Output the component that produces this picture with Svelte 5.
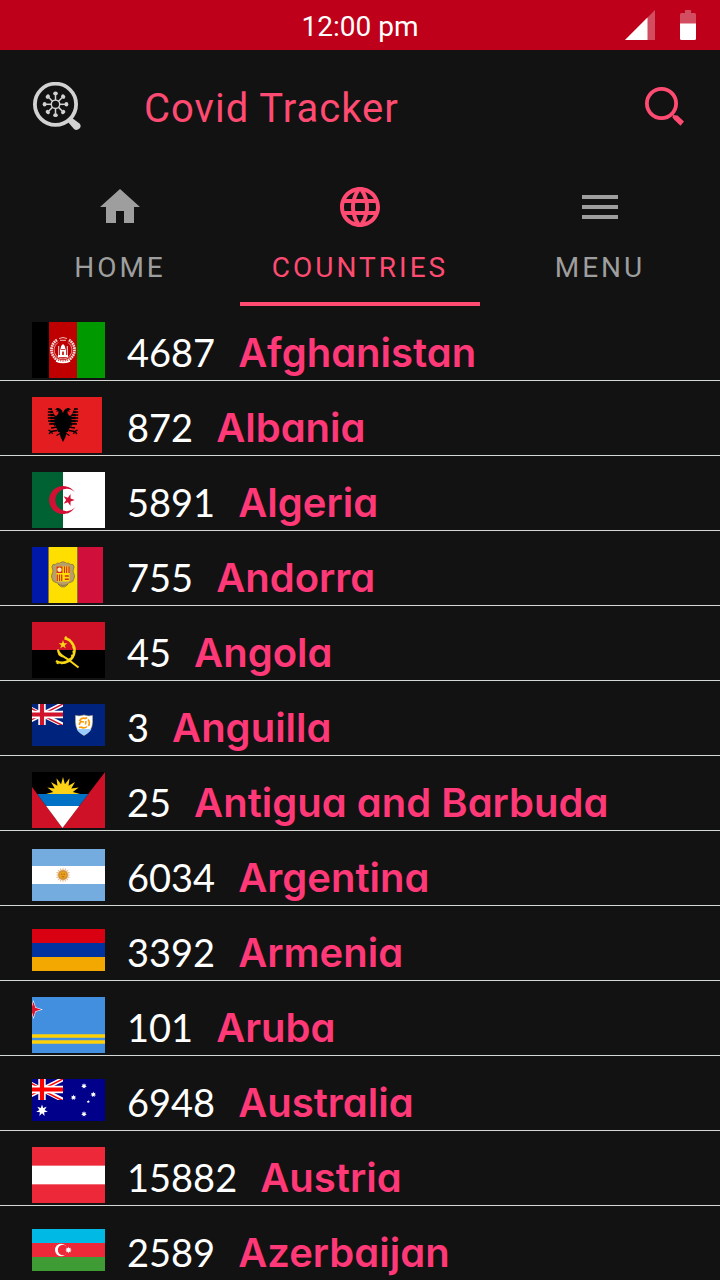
<script>
  const tabs = [
    { label: 'HOME', path: 'M10 20v-6h4v6h5v-8h3L12 3 2 12h3v8z' },
    {
      label: 'COUNTRIES',
      active: true,
      path: 'M11.99 2C6.47 2 2 6.48 2 12s4.47 10 9.99 10C17.52 22 22 17.52 22 12S17.52 2 11.99 2zm6.93 6h-2.95a15.65 15.65 0 0 0-1.38-3.56A8.03 8.03 0 0 1 18.92 8zM12 4.04c.83 1.2 1.48 2.53 1.91 3.96h-3.82c.43-1.43 1.08-2.76 1.91-3.96zM4.26 14C4.1 13.36 4 12.69 4 12s.1-1.36.26-2h3.38c-.08.66-.14 1.32-.14 2s.06 1.34.14 2H4.26zm.82 2h2.95c.32 1.25.78 2.45 1.38 3.56A7.99 7.99 0 0 1 5.08 16zm2.95-8H5.08a7.99 7.99 0 0 1 4.33-3.56A15.65 15.65 0 0 0 8.03 8zM12 19.96c-.83-1.2-1.48-2.53-1.91-3.96h3.82c-.43 1.43-1.08 2.76-1.91 3.96zM14.34 14H9.66c-.09-.66-.16-1.32-.16-2s.07-1.35.16-2h4.68c.09.65.16 1.32.16 2s-.07 1.34-.16 2zm.25 5.56c.6-1.11 1.06-2.31 1.38-3.56h2.95a8.03 8.03 0 0 1-4.33 3.56zM16.36 14c.08-.66.14-1.32.14-2s-.06-1.34-.14-2h3.38c.16.64.26 1.31.26 2s-.1 1.36-.26 2h-3.38z'
    },
    { label: 'MENU', path: 'M3 18h18v-2H3v2zm0-5h18v-2H3v2zm0-7v2h18V6H3z' }
  ];

  // box is the visible part of each flag: x, y, width, height
  const countries = [
    { code: 'af', name: 'Afghanistan', cases: 4687, box: [11, 0, 73, 56] },
    { code: 'al', name: 'Albania', cases: 872, box: [0, 0, 70, 56] },
    { code: 'dz', name: 'Algeria', cases: 5891, box: [11, 0, 73, 56] },
    { code: 'ad', name: 'Andorra', cases: 755, box: [0, 0, 71, 56] },
    { code: 'ao', name: 'Angola', cases: 45, box: [11, 0, 73, 56] },
    { code: 'ai', name: 'Anguilla', cases: 3, box: [11, 0, 73, 42] },
    { code: 'ag', name: 'Antigua and Barbuda', cases: 25, box: [0, 0, 73, 56] },
    { code: 'ar', name: 'Argentina', cases: 6034, box: [0, 0, 73, 52] },
    { code: 'am', name: 'Armenia', cases: 3392, box: [0, 0, 73, 42] },
    { code: 'aw', name: 'Aruba', cases: 101, box: [0, 0, 73, 56] },
    { code: 'au', name: 'Australia', cases: 6948, box: [11, 0, 73, 42] },
    { code: 'at', name: 'Austria', cases: 15882, box: [0, 0, 73, 56] },
    { code: 'az', name: 'Azerbaijan', cases: 2589, box: [0, 0, 73, 42] }
  ];

  function star(cx, cy, outer, inner, points, start = -90) {
    const out = [];
    for (let i = 0; i < points * 2; i++) {
      const r = i % 2 ? inner : outer;
      const a = ((start + (i * 180) / points) * Math.PI) / 180;
      out.push(`${(cx + r * Math.cos(a)).toFixed(2)},${(cy + r * Math.sin(a)).toFixed(2)}`);
    }
    return out.join(' ');
  }

  const spokes = [0, 45, 90, 135, 180, 225, 270, 315];
</script>

{#snippet unionJack(red)}
  <svg x="0" y="0" width="42" height="21" viewBox="0 0 42 21">
    <path d="M0 0L42 21M42 0L0 21" stroke="#fff" stroke-width="4.6" />
    <path d="M21 11.2L42 21.7M21 10.5L42 0M0 -.7L21 9.8M0 21L21 10.5" stroke={red} stroke-width="1.5" />
    <path d="M21 0V21M0 10.5H42" stroke="#fff" stroke-width="7.4" />
    <path d="M21 0V21M0 10.5H42" stroke={red} stroke-width="4.2" />
  </svg>
{/snippet}

{#snippet flag(c)}
  <svg class="flag" viewBox={c.box.join(' ')} width={c.box[2]} height={c.box[3]} aria-hidden="true">
    {#if c.code === 'af'}
      <rect width="28" height="56" fill="#000" />
      <rect x="28" width="28" height="56" fill="#bf0000" />
      <rect x="56" width="28" height="56" fill="#009900" />
      <g fill="none" stroke="#fff">
        <path d="M36 18A11.500 11.500 0 1 0 48 18" stroke-width="2.8" stroke-dasharray="1.700 .6" opacity=".85" />
        <path d="M37 20.500A9 9 0 1 0 47 20.500" stroke-width=".6" />
        <path d="M38 16.500q4 -2 8 0M39 18.300h6" stroke-width=".9" opacity=".8" />
        <path d="M35 39q7 3 14 0" stroke-width="1.600" />
        <path d="M37.700 24v9M46.300 24v9" stroke-width=".9" />
      </g>
      <path d="M39 33v-6h.5q0-3.500 2.500-5q2.500 1.500 2.500 5h.5v6z" fill="#fff" />
      <path d="M41.200 33v-3q.8-1.300 1.600 0V33zM39.500 27h5v.7h-5z" fill="#bf0000" />
      <path d="M37 33h10v2.200h-10z" fill="#fff" />
    {:else if c.code === 'al'}
      <rect width="70" height="56" fill="#e41e20" />
      <g stroke="#000" stroke-width="1.300" fill="none">
        {#each [1, -1] as side}
          <g transform={`translate(31 0) scale(${side} 1)`}>
            <path fill="#000" stroke="none" d="M0 16.500C.5 13 3 10.800 6 11L8 12.800L5.500 13L7 14.800L4.500 14.300C4.200 16 5 18 7 19C9.500 18 10 14 11.500 11.500L12.500 12V27L9.500 26.500L8.500 31L6.500 31L5 35L3.500 35L2.500 40L0 45z" />
            <path d="M11 12h3.800M10 15h5.200M9 18h6.200M8 21h7.200M8 24h7M8 27h6M6 30l6 1M6 33.500l6 1l2.500-1.500M12 34.500l2 2.500M11.500 34.500l-1 2.500M3 36.500l3.500 2" />
            <path d="M10.500 13.500h5M9.500 16.500h6M8.500 19.500h7M8.500 22.500h7M8.500 25.500h6.500M7 29l6 .5" stroke="#e41e20" stroke-width=".8" />
          </g>
        {/each}
      </g>
    {:else if c.code === 'dz'}
      <rect width="42" height="56" fill="#006233" />
      <rect x="42" width="42" height="56" fill="#fff" />
      <path d="M54 20.700A14 14 0 1 0 54 35.300A11.200 11.200 0 1 1 54 20.700z" fill="#d21034" />
      <polygon points={star(47.6, 28, 6.2, 2.4, 5, 0)} fill="#d21034" />
    {:else if c.code === 'ad'}
      <rect width="17" height="56" fill="#0018a8" />
      <rect x="16" width="30" height="56" fill="#8b6f3c" />
      <rect x="17" width="28" height="56" fill="#fedf00" />
      <rect x="46" width="25" height="56" fill="#d0103a" />
      <path d="M21 17.500q3 .5 4.500-1.500q2 1 3-.500q2.500-1.500 5 0q1 1.500 3 .5q1.500 2 4.500 1.500q2 2.500 .5 4.500q-1 2 0 4q2 3 .5 5.500q-.5 3.500-4 4q-2 0-3 2.500q-2 2.500-4 2q-2 .5-4-2q-1-2.500-3-2.500q-3.500-.5-4-4q-1.500-2.500 .5-5.500q1-2 0-4q-1.500-2 .5-4.500z" fill="#b89f68" stroke="#8b7440" stroke-width=".8" />
      <rect x="24.500" y="19.500" width="13" height="15" rx="1" fill="#fedf00" />
      <rect x="24.500" y="19.500" width="6" height="6.500" fill="#d52b1e" />
      <circle cx="27.500" cy="22.800" r="2.200" fill="#ffe9b0" />
      <path d="M32.500 19.500v6.500M34.700 19.500v6.500M37 19.500v6.500M25.300 27.500v6.500M27.500 27.500v6.500M29.700 27.500v6.500" stroke="#d52b1e" stroke-width="1.200" />
      <path d="M32.800 29h4M32.800 32.300h4" stroke="#d52b1e" stroke-width="1.500" />
      <path d="M26 37.500q5 2 10 0" stroke="#8b7440" fill="none" />
    {:else if c.code === 'ao'}
      <rect width="84" height="28" fill="#ce1126" />
      <rect y="28" width="84" height="28" fill="#000" />
      <g fill="none" stroke="#f9d616">
        <path d="M43.500 16.300A12.300 12.300 0 1 1 35 39" stroke-width="2.600" />
        <path d="M44 15A13.500 13.500 0 1 1 34 40.300" stroke-width="2" stroke-dasharray="2 2.300" />
        <path d="M37 27.500C38 34 44 34.500 48.500 38.500L57.500 45.500" stroke-width="2" />
      </g>
      <path d="M36.500 27.500l2 4l4 3l-1 1q-6-2-5-8z" fill="#f9d616" />
      <polygon points={star(42, 22.6, 4.6, 1.8, 5)} fill="#f9d616" />
    {:else if c.code === 'ai'}
      <rect width="84" height="42" fill="#00247d" />
      {@render unionJack('#cf142b')}
      <path d="M54.500 11.500q4 1 8.500-.500q4.500 1.500 8.500 .500V18q0 9-8.500 13.500Q54.500 27 54.500 18z" fill="#fff" stroke="#b8b083" stroke-width=".6" />
      <path d="M55.700 25h14.600q-2 4-7.300 6.200q-5.300-2.200-7.300-6.200z" fill="#9cf" />
      <path d="M58.500 17q2-4 6-2.500l1.500-1M67 15.500q2.500 3 .5 6.500M66 22.500q-3 2.500-6 .5l-2 .5M58.500 21q-.5-2 1.500-3.500l3 .5M65 17l-.5 3.500" fill="none" stroke="#ff9900" stroke-width="1.600" />
    {:else if c.code === 'ag'}
      <rect width="73" height="56" fill="#ce1126" />
      <path d="M0 0H73L30.500 56L0 15z" fill="#000" />
      <polygon points={star(31, 22, 17, 10, 16)} fill="#fcd116" />
      <path d="M5.200 22H56.300L47.200 34H14.100z" fill="#0072c6" />
      <path d="M14.100 34H47.200L30.500 56z" fill="#fff" />
    {:else if c.code === 'ar'}
      <rect width="73" height="52" fill="#74acdf" />
      <rect y="17" width="73" height="18" fill="#fff" />
      <polygon points={star(31, 26, 7.8, 4.4, 16)} fill="#dcae78" />
      <circle cx="31" cy="26" r="4.200" fill="#e8a01c" stroke="#b8782a" stroke-width=".6" />
      <path d="M29 25.200h1.500M31.500 25.200H33M29.800 27.800h2.500" stroke="#9c5510" stroke-width=".7" />
    {:else if c.code === 'am'}
      <rect width="73" height="14" fill="#d90012" />
      <rect y="14" width="73" height="14" fill="#0033a0" />
      <rect y="28" width="73" height="14" fill="#f2a800" />
    {:else if c.code === 'aw'}
      <rect width="73" height="56" fill="#418fde" />
      <path d="M0 39H73M0 45H73" stroke="#bfb85a" stroke-width="4" />
      <path d="M0 39H73M0 45H73" stroke="#ffd100" stroke-width="2.400" />
      <polygon points={star(1.5, 12.5, 9.5, 3.1, 4)} fill="#fff" />
      <polygon points={star(1.5, 12.5, 7.8, 2.6, 4)} fill="#d8142f" />
    {:else if c.code === 'au'}
      <rect width="84" height="42" fill="#00008b" />
      {@render unionJack('#ff0000')}
      <g fill="#fff">
        <polygon points={star(21, 31.5, 6, 2.7, 7)} />
        <polygon points={star(63, 7, 2.9, 1.5, 7)} />
        <polygon points={star(72.3, 15.5, 2.9, 1.5, 7)} />
        <polygon points={star(52.5, 18.5, 2.9, 1.5, 7)} />
        <polygon points={star(67.3, 22.7, 1.7, 0.8, 5)} />
        <polygon points={star(63, 35, 2.9, 1.5, 7)} />
      </g>
    {:else if c.code === 'at'}
      <rect width="73" height="56" fill="#ed2939" />
      <rect y="18.660" width="73" height="18.660" fill="#fff" />
    {:else if c.code === 'az'}
      <rect width="73" height="14" fill="#00b9e4" />
      <rect y="14" width="73" height="14" fill="#ed2939" />
      <rect y="28" width="73" height="14" fill="#3f9c35" />
      <circle cx="29.200" cy="21" r="6.200" fill="#fff" />
      <circle cx="31" cy="21" r="5.200" fill="#ed2939" />
      <polygon points={star(36.5, 21, 3.2, 1.9, 8)} fill="#fff" />
    {/if}
  </svg>
{/snippet}

<div class="screen">
  <div class="status">
    <span></span>
    <time>12:00 pm</time>
    <div class="indicators">
      <svg width="30" height="30" viewBox="0 0 30 30" role="img" aria-label="Signal">
        <path d="M0 30L30 0V30z" fill="#fff" opacity=".3" />
        <path d="M0 30L22.500 7.500V30z" fill="#fff" />
      </svg>
      <svg width="16" height="30" viewBox="0 0 16 30" role="img" aria-label="Battery">
        <path d="M5 0h6v3h3.500q1.500 0 1.500 1.500V14H0V4.500Q0 3 1.500 3H5z" fill="#fff" opacity=".3" />
        <path d="M0 13.500H16V28.500q0 1.500-1.500 1.500H1.500Q0 30 0 28.500z" fill="#fff" />
      </svg>
    </div>
  </div>

  <header>
    <svg width="48" height="48" viewBox="0 0 48 48" aria-hidden="true">
      <circle cx="22.500" cy="22.300" r="20.600" fill="none" stroke="#d2d2d2" stroke-width="3.800" />
      <path d="M34.500 39.500L38.500 35.500L46.500 41.500Q48.800 44 46.500 46.500Q43.500 49 41 47z" fill="#d2d2d2" />
      <circle cx="22.500" cy="22.300" r="4.200" fill="none" stroke="#d2d2d2" stroke-width="1.400" />
      {#each spokes as angle}
        <g transform={`rotate(${angle} 22.5 22.3)`}>
          <path d="M26.500 22.300H32" stroke="#d2d2d2" stroke-width="1.500" />
          <ellipse cx="33.400" cy="22.300" rx="1.900" ry="2.300" fill="#d2d2d2" />
        </g>
      {/each}
    </svg>
    <h1>Covid Tracker</h1>
    <button type="button" aria-label="Search">
      <svg width="40" height="40" viewBox="0 0 40 40" aria-hidden="true">
        <circle cx="16.500" cy="17.500" r="14.600" fill="none" stroke="#ff4b72" stroke-width="3.800" />
        <path d="M27.500 31.500L28 29L32.500 29.500L39 35.500L35.500 39.700L29 33.500z" fill="#ff4b72" />
      </svg>
    </button>
  </header>

  <nav>
    {#each tabs as tab}
      <button type="button" class:active={tab.active} aria-current={tab.active ? 'page' : undefined}>
        <svg width="48" height="48" viewBox="0 0 24 24" aria-hidden="true"><path d={tab.path} fill="currentColor" /></svg>
        <span>{tab.label}</span>
      </button>
    {/each}
  </nav>

  <ul>
    {#each countries as c}
      <li>
        <span class="flagbox">{@render flag(c)}</span>
        <span class="cases">{c.cases}</span>
        <span class="name">{c.name}</span>
      </li>
    {/each}
  </ul>
</div>

<style>
  :global(body) {
    margin: 0;
    background: #121212;
  }
  .screen {
    background: #121212;
    font-family: Roboto, sans-serif;
    overflow: hidden;
  }
  svg {
    display: block;
    flex: none;
  }
  button {
    background: none;
    border: 0;
    padding: 0;
    margin: 0;
    font: inherit;
    color: inherit;
    cursor: pointer;
  }
  .status {
    display: grid;
    grid-template-columns: 1fr auto 1fr;
    align-items: center;
    height: 50px;
    padding: 0 24px;
    background: #be001a;
    color: #fff;
  }
  time {
    font-size: 28px;
    line-height: 32px;
    padding-top: 4px;
  }
  .indicators {
    display: flex;
    justify-content: flex-end;
    gap: 25px;
  }
  header {
    display: flex;
    align-items: center;
    height: 112px;
    padding: 0 35px 0 33px;
    color: #ff4b72;
  }
  h1 {
    flex: 1;
    margin: 0 0 0 63px;
    font-size: 40px;
    line-height: 48px;
    font-weight: 400;
    letter-spacing: 1px;
    padding-top: 6px;
  }
  nav {
    display: grid;
    grid-template-columns: repeat(3, 1fr);
  }
  nav button {
    display: flex;
    flex-direction: column;
    align-items: center;
    gap: 21px;
    padding: 21px 0 18px;
    border-bottom: 4px solid transparent;
    color: #9e9e9e;
    font-size: 28px;
    line-height: 32px;
    letter-spacing: 3px;
  }
  nav button.active {
    color: #ff4b72;
    border-bottom-color: #ff4b72;
  }
  ul {
    list-style: none;
    margin: 0;
    padding: 0;
  }
  li {
    display: flex;
    align-items: center;
    padding: 16px 32px 2px;
    border-bottom: 1px solid #d5d9d5;
  }
  li:last-child {
    border-bottom: 0;
  }
  .flagbox {
    display: flex;
    align-items: center;
    flex: none;
    width: 73px;
    height: 56px;
    margin-right: 22px;
  }
  .cases {
    font: 400 38px/48px "Century Gothic", Lato, sans-serif;
    color: #fff;
    margin-right: 23px;
    padding-top: 4px;
  }
  .name {
    font: 600 40px/48px "Century Gothic", Inter, sans-serif;
    font-feature-settings: "cv11";
    color: #ff3878;
    padding-top: 6px;
    white-space: nowrap;
  }
</style>
